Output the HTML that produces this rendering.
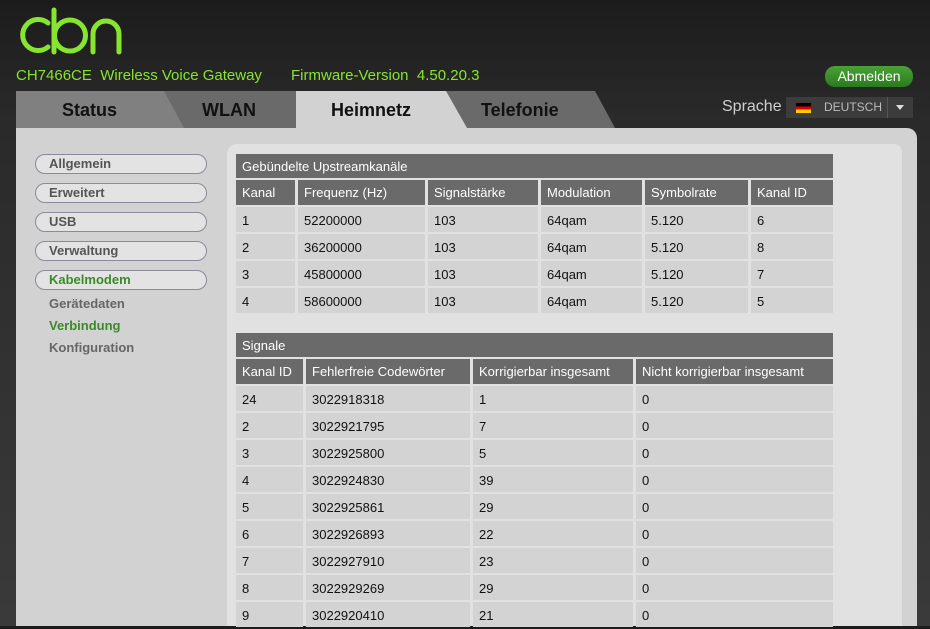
<!DOCTYPE html>
<html><head><meta charset="utf-8"><style>
*{margin:0;padding:0;box-sizing:border-box}
body{width:930px;height:626px;overflow:hidden;background:linear-gradient(180deg,#1c1c1c 0,#2a2a2a 120px,#3a3a3a 626px);font-family:"Liberation Sans",sans-serif;position:relative}
.a{position:absolute}
.grn{color:#86e52e;font-size:15px}
.btn{left:825px;top:66px;width:88px;height:21px;border-radius:10px;background:linear-gradient(#4aa236,#2b7a1e);color:#fff;font-size:14px;text-align:center;line-height:21px}
.panel{left:16px;top:128px;width:901px;height:498px;background:#d2d2d2;border-top-right-radius:10px}
.inner{left:227px;top:144px;width:675px;height:482px;background:#e1e1e1;border-top-left-radius:10px;border-top-right-radius:8px}
.pill{left:35px;width:172px;height:20px;border:1.5px solid #8a8a9a;border-radius:10px;background:#e3e3e3;font-size:13px;font-weight:bold;color:#555;padding-left:13px;line-height:18px}
.sub{left:49px;font-size:13px;font-weight:bold;color:#666}
table{position:absolute;left:233px;border-collapse:separate;border-spacing:3px 2px;font-size:13px;color:#111}
td{background:#d3d3d3;height:25px;padding-left:6px;vertical-align:middle;padding-top:1px}
th{background:#6a6a6a;color:#fff;font-weight:normal;text-align:left;padding-left:6px;height:25px}
th.t{height:24px}
</style></head><body>
<svg class="a" style="left:0;top:0" width="130" height="60">
<g fill="none" stroke="#86e52e" stroke-width="5" stroke-linecap="round">
<path d="M48 23 A15.5 15.5 0 1 0 48 47"/>
<path d="M54 10 V52"/>
<circle cx="70" cy="35.5" r="15.5"/>
<path d="M93 52 V34 A13 13 0 0 1 119 34 V52"/>
</g></svg>
<div class="a grn" style="left:16px;top:67px">CH7466CE&nbsp; Wireless Voice Gateway</div>
<div class="a grn" style="left:291px;top:67px">Firmware-Version&nbsp; 4.50.20.3</div>
<div class="a btn">Abmelden</div>
<div class="a" style="left:722px;top:98px;color:#cfcfcf;font-size:16px">Sprache</div>
<div class="a" style="left:786px;top:97px;width:127px;height:21px;background:#3c3c3c;color:#bbb;font-size:12px;line-height:21px">
<span class="a" style="left:10px;top:6px;width:15px;height:10px;background:linear-gradient(#000 33%,#d00 33%,#d00 66%,#fc0 66%)"></span>
<span class="a" style="left:38px">DEUTSCH</span>
<span class="a" style="left:101px;top:0;width:1px;height:21px;background:#555"></span>
<span class="a" style="left:110px;top:8px;border:4px solid transparent;border-top:5px solid #ddd"></span></div>
<svg class="a" style="left:0;top:90px" width="930" height="40">
<polygon points="440,1 595,1 615,38 460,38" fill="#6a6a6a"/>
<polygon points="160,1 296,1 296,38 180,38" fill="#6a6a6a"/>
<polygon points="16,1 164,1 184,38 16,38" fill="#808080"/>
<polygon points="296,1 446,1 467,38 296,38" fill="#d2d2d2"/>
<g font-family="Liberation Sans" font-weight="bold" font-size="18" fill="#111">
<text x="62" y="26">Status</text><text x="202" y="26">WLAN</text><text x="331" y="26">Heimnetz</text><text x="481" y="26">Telefonie</text></g>
</svg>
<div class="a panel"></div>
<div class="a inner"></div>
<div class="a pill" style="top:154px">Allgemein</div>
<div class="a pill" style="top:183px">Erweitert</div>
<div class="a pill" style="top:212px">USB</div>
<div class="a pill" style="top:241px">Verwaltung</div>
<div class="a pill" style="top:270px;color:#3a8a28">Kabelmodem</div>
<div class="a sub" style="top:296px">Gerätedaten</div>
<div class="a sub" style="top:318px;color:#3a8a28">Verbindung</div>
<div class="a sub" style="top:340px">Konfiguration</div>
<table style="top:152px">
<colgroup><col style="width:59px"><col style="width:127px"><col style="width:110px"><col style="width:101px"><col style="width:103px"><col style="width:82px"></colgroup>
<tr><th class="t" colspan="6">Gebündelte Upstreamkanäle</th></tr>
<tr><th>Kanal</th><th>Frequenz (Hz)</th><th>Signalstärke</th><th>Modulation</th><th>Symbolrate</th><th>Kanal ID</th></tr>
<tr><td>1</td><td>52200000</td><td>103</td><td>64qam</td><td>5.120</td><td>6</td></tr>
<tr><td>2</td><td>36200000</td><td>103</td><td>64qam</td><td>5.120</td><td>8</td></tr>
<tr><td>3</td><td>45800000</td><td>103</td><td>64qam</td><td>5.120</td><td>7</td></tr>
<tr><td>4</td><td>58600000</td><td>103</td><td>64qam</td><td>5.120</td><td>5</td></tr>
</table>
<table style="top:331px">
<colgroup><col style="width:67px"><col style="width:164px"><col style="width:160px"><col style="width:197px"></colgroup>
<tr><th class="t" colspan="4">Signale</th></tr>
<tr><th>Kanal ID</th><th>Fehlerfreie Codewörter</th><th>Korrigierbar insgesamt</th><th>Nicht korrigierbar insgesamt</th></tr>
<tr><td>24</td><td>3022918318</td><td>1</td><td>0</td></tr>
<tr><td>2</td><td>3022921795</td><td>7</td><td>0</td></tr>
<tr><td>3</td><td>3022925800</td><td>5</td><td>0</td></tr>
<tr><td>4</td><td>3022924830</td><td>39</td><td>0</td></tr>
<tr><td>5</td><td>3022925861</td><td>29</td><td>0</td></tr>
<tr><td>6</td><td>3022926893</td><td>22</td><td>0</td></tr>
<tr><td>7</td><td>3022927910</td><td>23</td><td>0</td></tr>
<tr><td>8</td><td>3022929269</td><td>29</td><td>0</td></tr>
<tr><td>9</td><td>3022920410</td><td>21</td><td>0</td></tr>
</table>
</body></html>
